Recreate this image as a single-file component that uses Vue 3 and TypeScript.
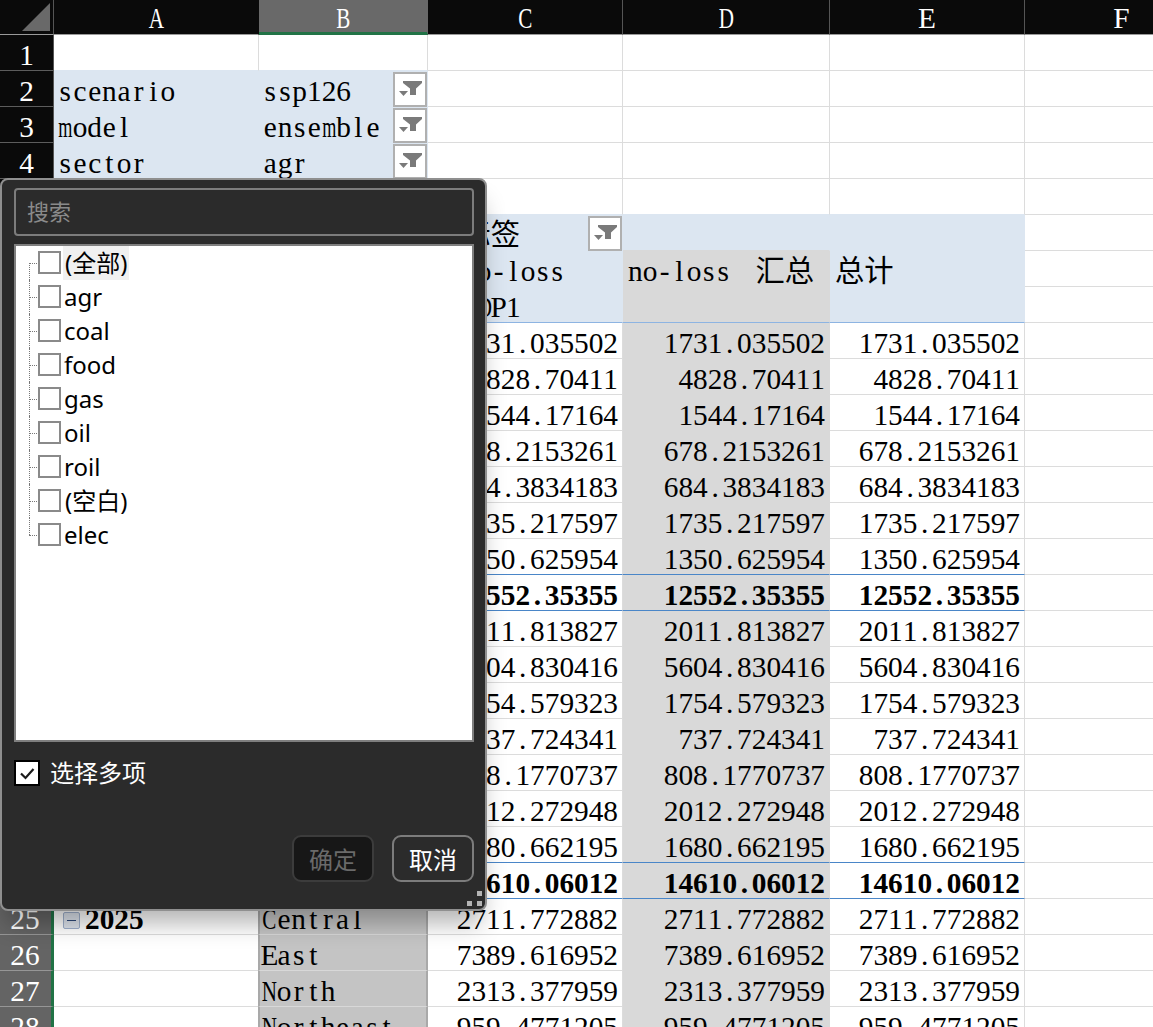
<script setup lang="ts">
interface Cell {
  text: string
  cls?: string
  filter?: boolean
  expander?: boolean
}

const columns = ['A', 'B', 'C', 'D', 'E', 'F']
const regions = ['Central', 'East', 'North', 'Northeast']

const groups = [
  {
    values: ['1731.035502', '4828.70411', '1544.17164', '678.2153261', '684.3834183', '1735.217597', '1350.625954'],
    total: '12552.35355',
  },
  {
    values: ['2011.813827', '5604.830416', '1754.579323', '737.724341', '808.1770737', '2012.272948', '1680.662195'],
    total: '14610.06012',
  },
]
const thirdGroup = ['2711.772882', '7389.616952', '2313.377959', '959.4771205']

const blank = (cls = ''): Cell => ({ text: '', cls })
const valueRow = (v: string, cls = ''): Cell[] => [
  { text: v, cls: `num ${cls}` },
  { text: v, cls: `num grey ${cls}` },
  { text: v, cls: `num ${cls}` },
  blank(),
]

const rows: Cell[][] = []
rows.push([blank('fill-edge'), blank('fill-edge'), blank(), blank(), blank(), blank()])
for (const [key, val] of [
  ['scenario', 'ssp126'],
  ['model', 'ensemble'],
  ['sector', 'agr'],
]) {
  rows.push([
    { text: key, cls: 'blue' },
    { text: val, cls: 'blue', filter: true },
    blank(),
    blank(),
    blank(),
    blank(),
  ])
}
rows.push([blank(), blank(), blank('fill-edge'), blank('fill-edge'), blank('fill-edge'), blank()])
rows.push([
  blank(),
  blank(),
  { text: '列标签', cls: 'blue', filter: true },
  blank('blue grey-edge'),
  blank('blue'),
  blank(),
])
rows.push([
  blank(),
  blank(),
  { text: 'no-loss', cls: 'blue indent' },
  { text: 'no-loss 汇总', cls: 'grey tall head-end' },
  { text: '总计', cls: 'blue tall head-end' },
  blank(),
])
rows.push([blank(), blank(), { text: 'GDP1', cls: 'blue indent head-end' }, blank()])

for (const g of groups) {
  g.values.forEach((v, i) => {
    rows.push([blank(), blank(), ...valueRow(v, i === g.values.length - 1 ? 'total-edge' : '')])
  })
  rows.push([blank(), blank(), ...valueRow(g.total, 'strong total-edge')])
}
thirdGroup.forEach((v, i) => {
  const first: Cell =
    i === 0 ? { text: '2025', cls: 'strong sel-side year', expander: true } : blank('sel-side')
  rows.push([first, { text: regions[i], cls: 'sel' }, ...valueRow(v)])
})

const filterItems = ['(全部)', 'agr', 'coal', 'food', 'gas', 'oil', 'roil', '(空白)', 'elec']

function glyphClass(c: string): string {
  if (c === ' ') return 'ch gap'
  if (/[\u2e80-\u9fff]/.test(c)) return 'ch cjk'
  if (/[mM]/.test(c)) return 'ch tightest'
  if (/[wWANDCBGOQHKUVXY]/.test(c)) return 'ch tight'
  return 'ch'
}
</script>

<template>
  <div class="sheet">
    <div class="grid">
      <div class="corner">
        <svg width="53" height="34" viewBox="0 0 53 34"><path d="M22 31 L50 3 V31 Z" fill="#696969" /></svg>
      </div>
      <div v-for="c in columns" :key="c" class="col-head" :class="{ active: c === 'B', quiet: c === 'A' }">
        <span :class="glyphClass(c)">{{ c }}</span>
      </div>

      <template v-for="(row, r) in rows" :key="r">
        <div class="row-head" :class="{ selected: r >= 24 }">
          <span v-for="(d, k) in String(r + 1)" :key="k" class="ch">{{ d }}</span>
        </div>
        <div v-for="(cell, k) in row" :key="k" class="cell" :class="cell.cls">
          <span v-if="cell.expander" class="expander"><i></i></span>
          <span class="line">
            <span v-for="(c, n) in cell.text" :key="n" :class="glyphClass(c)">{{ c }}</span>
          </span>
          <span v-if="cell.filter" class="filter-btn">
            <svg width="30" height="31" viewBox="0 0 30 31">
              <path d="M8 7 H27 V9 L21 14.5 V21 H15 V14.5 L8 9 Z" fill="#7a7a7a" />
              <path d="M4 17 H13 L8.5 22 Z" fill="#7a7a7a" />
            </svg>
          </span>
        </div>
      </template>
    </div>

    <div class="popup">
      <div class="search">搜索</div>
      <div class="tree">
        <div v-for="(item, i) in filterItems" :key="item" class="tree-row" :class="{ last: i === filterItems.length - 1 }">
          <span class="box"></span>
          <span class="label" :class="{ current: i === 0, latin: !item.startsWith('(') }">{{ item }}</span>
        </div>
      </div>
      <div class="multi">
        <span class="multi-box">
          <svg width="22" height="22" viewBox="0 0 22 22">
            <path d="M5 11.5 L9.5 16 L17.5 7" fill="none" stroke="#1a1a1a" stroke-width="2.2" />
          </svg>
        </span>
        <span>选择多项</span>
      </div>
      <div class="actions">
        <button class="btn disabled">确定</button>
        <button class="btn">取消</button>
      </div>
      <svg class="grip" width="15" height="15" viewBox="0 0 15 15">
        <path d="M10 0h5v5h-5zM10 10h5v5h-5zM0 10h5v5H0z" fill="#b4b4b4" />
      </svg>
    </div>
  </div>
</template>

<style scoped>
.sheet {
  position: relative;
  width: 1153px;
  height: 1027px;
  overflow: hidden;
  background: #fff;
  font-family: "Liberation Serif", "Noto Sans CJK SC", serif;
  font-size: 29.33px;
  color: #000;
}
.grid {
  display: grid;
  grid-template-columns: 54px 205px 169px 195px 207px 195px 194px;
  grid-auto-rows: 36px;
  grid-template-rows: 35px;
}
.grid > * {
  box-sizing: border-box;
  min-width: 0;
}
.ch {
  display: inline-flex;
  justify-content: center;
  width: 0.5em;
  white-space: pre;
}
.ch.cjk {
  width: 1em;
}
.ch.gap {
  width: 0.85em;
}
.ch.tight {
  transform: scaleX(0.72);
}
.ch.tightest {
  transform: scaleX(0.62);
}
.corner {
  background: #0a0a0a;
  border-right: 1px solid #555;
  border-bottom: 1px solid #9a9a9a;
}
.corner svg {
  display: block;
}
.col-head {
  background: #0a0a0a;
  color: #fff;
  text-align: center;
  line-height: 37px;
  border-right: 1px solid #555;
  border-bottom: 1px solid #9a9a9a;
}
.col-head.quiet {
  border-right-color: #0a0a0a;
}
.col-head.active {
  background: #696969;
  border-right-color: #696969;
  border-bottom: 3px solid #217346;
}
.row-head {
  background: #0a0a0a;
  color: #fff;
  text-align: center;
  line-height: 40px;
  border-right: 1px solid #555;
  border-bottom: 1px solid #5c5c5c;
}
.row-head.selected {
  background: #646464;
  border-right: 3px solid #217346;
  border-bottom-color: #969696;
  padding-right: 1px;
}
.cell {
  position: relative;
  height: 36px;
  line-height: 40px;
  padding: 0 4px 0 4px;
  white-space: nowrap;
  border-right: 1px solid #dcdcdc;
  border-bottom: 1px solid #dcdcdc;
}
.blue {
  background: #dce6f1;
  border-color: #dce6f1;
}
.fill-edge {
  border-bottom-color: #dce6f1;
}
.grey-edge {
  border-bottom-color: #d9d9d9;
}
.grey {
  background: #d9d9d9;
  border-color: #d9d9d9;
}
.tall {
  grid-row: span 2;
  height: 72px;
  padding-left: 5px;
}
.indent {
  padding-left: 34px;
}
.head-end {
  border-bottom-color: #8db4e2;
}
.num {
  text-align: right;
}
.strong {
  font-weight: 700;
}
.total-edge {
  border-bottom-color: #4a86c8;
}
.sel {
  background: #c4c4c4;
  border-right: 2px solid #a9a9a9;
  border-left: 2px solid #a9a9a9;
  border-bottom-color: #d8d8d8;
  padding-left: 2px;
  margin-left: -1px;
}
.year {
  display: flex;
}
.expander {
  flex: none;
  box-sizing: border-box;
  display: flex;
  align-items: center;
  justify-content: center;
  width: 17px;
  height: 17px;
  margin: 13px 5px 0 5px;
  background: #dde3ec;
  border: 1px solid #9fb0cc;
  border-radius: 2px;
}
.expander i {
  display: block;
  width: 9px;
  height: 1px;
  background: #2f4a7a;
}
.filter-btn {
  position: absolute;
  right: 0;
  top: 1px;
  box-sizing: border-box;
  width: 34px;
  height: 35px;
  background: #fff;
  border: 2px solid #b0b0b0;
  z-index: 1;
}
.filter-btn svg,
.multi-box svg {
  display: block;
}
.popup {
  position: absolute;
  left: 0;
  top: 178px;
  box-sizing: border-box;
  width: 487px;
  height: 733px;
  display: flex;
  flex-direction: column;
  padding: 8px 11px 27px 12px;
  background: #2b2b2b;
  border: 2px solid #8f8f8f;
  border-radius: 8px;
  box-shadow: 0 18px 24px -6px rgba(0, 0, 0, 0.3);
  font-family: "Noto Sans", "Noto Sans CJK SC", sans-serif;
  font-size: 24px;
  color: #fff;
  z-index: 2;
}
.search {
  box-sizing: border-box;
  height: 48px;
  padding-left: 11px;
  line-height: 42px;
  color: #8a8a8a;
  border: 2px solid #7c7c7c;
  border-radius: 4px;
  font-size: 22px;
}
.tree {
  box-sizing: border-box;
  height: 498px;
  margin-top: 8px;
  padding-left: 22px;
  background: #fff;
  border: 2px solid #7f7f7f;
  color: #000;
}
.tree-row {
  position: relative;
  display: flex;
  height: 34px;
  align-items: flex-start;
}
.tree-row::before {
  content: "";
  position: absolute;
  left: -9px;
  top: 17px;
  width: 8px;
  border-top: 1px dotted #777;
}
.tree-row::after {
  content: "";
  position: absolute;
  left: -9px;
  top: 0;
  height: 34px;
  border-left: 1px dotted #777;
}
.tree-row:first-child::after {
  top: 17px;
  height: 17px;
}
.tree-row.last::after {
  height: 17px;
}
.box {
  flex: none;
  box-sizing: border-box;
  width: 23px;
  height: 23px;
  margin-top: 5px;
  background: #fff;
  border: 2px solid #8a8a8a;
}
.label {
  margin-left: 2px;
  padding: 0 2px;
  height: 34px;
  line-height: 34px;
}
.label.latin {
  padding-left: 1px;
}
.label.current {
  background: #f0f0f0;
}
.multi {
  display: flex;
  align-items: center;
  margin-top: 18px;
  gap: 10px;
  height: 26px;
  line-height: 26px;
}
.multi-box {
  box-sizing: border-box;
  width: 26px;
  height: 26px;
  background: #fff;
  border: 2px solid #000;
}
.actions {
  display: flex;
  justify-content: flex-end;
  gap: 18px;
  margin-top: auto;
}
.btn {
  box-sizing: border-box;
  width: 82px;
  height: 47px;
  padding: 0;
  background: #2b2b2b;
  border: 2px solid #7c7c7c;
  border-radius: 9px;
  color: #fff;
  font: inherit;
}
.btn.disabled {
  background: #171717;
  border-color: #3c3c3c;
  color: #6a6a6a;
}
.grip {
  position: absolute;
  right: 3px;
  bottom: 3px;
}
</style>

<style>
html,
body {
  margin: 0;
  overflow: hidden;
  background: #fff;
}
</style>
